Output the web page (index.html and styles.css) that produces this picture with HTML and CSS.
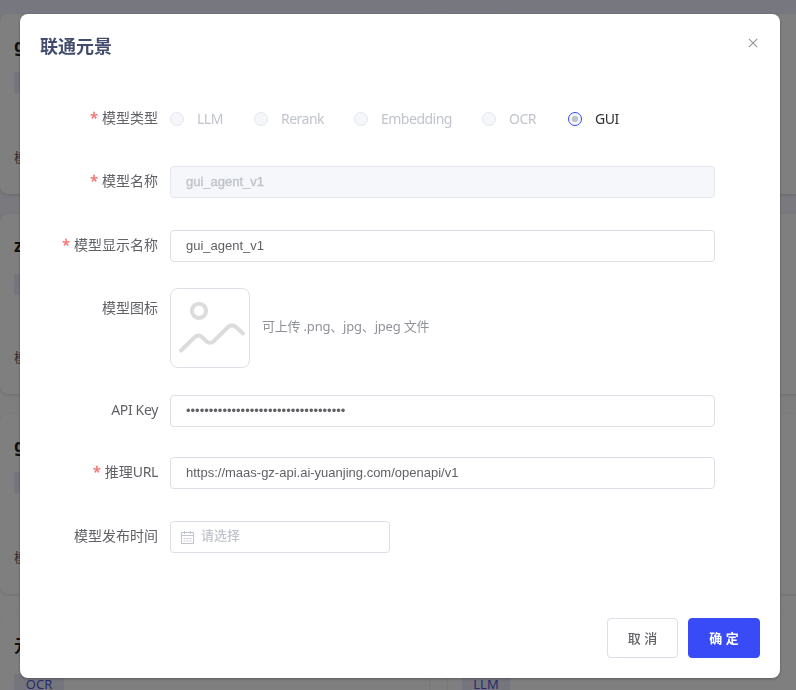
FILE: index.html
```html
<!DOCTYPE html>
<html lang="zh-CN">
<head>
<meta charset="utf-8">
<title>联通元景</title>
<link rel="stylesheet" href="styles.css">
</head>
<body>
<main class="page">
  <article class="card"><h3>gui_agent_v1</h3><span class="tag">GUI</span><p>模型</p></article>
  <article class="card"></article>
  <article class="card"><h3>zh_model</h3><span class="tag low">LLM</span><p>模型</p></article>
  <article class="card"></article>
  <article class="card"><h3>gui_agent</h3><span class="tag">GUI</span><p>模型</p></article>
  <article class="card"></article>
  <article class="card"><h3>元景</h3><span class="tag low">OCR</span></article>
  <article class="card"><h3>元景</h3><span class="tag low">LLM</span></article>
</main>
<div class="mask"></div>
<section class="dialog">
  <header class="head">
    <h2>联通元景</h2>
    <svg class="close" viewBox="0 0 10 10"><path d="M.8.8 9.2 9.2M9.2.8.8 9.2"/></svg>
  </header>
  <form class="form">
    <div class="row types">
      <label class="name req">模型类型</label>
      <div class="radios">
        <span class="radio"><i></i>LLM</span>
        <span class="radio"><i></i>Rerank</span>
        <span class="radio"><i></i>Embedding</span>
        <span class="radio"><i></i>OCR</span>
        <span class="radio on"><i></i>GUI</span>
      </div>
    </div>
    <div class="row model"><label class="name req">模型名称</label><div class="input disabled">gui_agent_v1</div></div>
    <div class="row display"><label class="name req">模型显示名称</label><div class="input">gui_agent_v1</div></div>
    <div class="row upload">
      <label class="name">模型图标</label>
      <div class="picture">
        <svg viewBox="0 0 78 78"><circle cx="28" cy="21.8" r="7.1"/><path d="M10 61.500 22.500 49.300Q27 44.500 31.500 48.500L35 52Q39 55.500 43 52L56 39Q61 34 65.500 38.500L72 44.500"/></svg>
      </div>
      <span class="hint">可上传 .png、jpg、jpeg 文件</span>
    </div>
    <div class="row key"><label class="name latin">API Key</label><div class="input">•••••••••••••••••••••••••••••••••••</div></div>
    <div class="row url"><label class="name req">推理<span class="latin">URL</span></label><div class="input">https://maas-gz-api.ai-yuanjing.com/openapi/v1</div></div>
    <div class="row date">
      <label class="name">模型发布时间</label>
      <div class="input picker">
        <svg viewBox="0 0 13 13"><path d="M.5 1.500h12v11H.5zM.5 4.500h12M3.500 0v3M9.500 0v3M2.500 7.500h2M5.500 7.500h2M8.500 7.500h2M2.500 10h2M5.500 10h2M8.500 10h2"/></svg>
        <span>请选择</span>
      </div>
    </div>
  </form>
  <footer class="foot">
    <button class="btn">取 消</button>
    <button class="btn primary">确 定</button>
  </footer>
</section>
</body>
</html>
```
FILE: styles.css
```css
* { box-sizing: border-box; }
body {
  margin: 0;
  height: 690px;
  overflow: hidden;
  font-family: "Noto Sans", "Noto Sans CJK SC", sans-serif;
  font-size: 13px;
  color: #606266;
}
.page {
  display: grid;
  grid-template-columns: 429px 429px;
  grid-auto-rows: 180px;
  gap: 20px 19px;
  height: 690px;
  padding-top: 14px;
  overflow: hidden;
  background: linear-gradient(#eff0fe 0, #f2f2fc 210px, #fdfdfe 420px, #fff 620px);
}
.card {
  padding: 19px 14px;
  border-radius: 8px;
  background: #fff;
  box-shadow: 0 1px 3px rgba(0, 0, 0, .14);
}
.card h3 { margin: 0; height: 39px; line-height: 26px; font-size: 17px; color: #222; }
.tag {
  display: block;
  width: 50px;
  height: 21px;
  line-height: 21px;
  text-align: center;
  background: #ebebfc;
  color: #5058d8;
}
.card:nth-child(8) .tag { width: 48px; }
.tag.low { margin-top: 2px; margin-bottom: -2px; }
.card p { margin: 54px 0 0; line-height: 20px; }
.mask { position: fixed; inset: 0; background: rgba(0, 0, 0, .5); }
.dialog {
  position: fixed;
  top: 14px;
  left: 20px;
  display: flex;
  flex-direction: column;
  width: 760px;
  height: 664px;
  border-radius: 8px;
  background: #fff;
  box-shadow: 0 1px 3px rgba(0, 0, 0, .3);
}
.head { display: flex; justify-content: space-between; padding: 20px 22px 0 20px; height: 92px; }
.head h2 { margin: 0; font-size: 18px; line-height: 25px; font-weight: 700; color: #434c6c; }
.close { width: 10px; height: 10px; margin-top: 4px; stroke: #909399; stroke-width: 1.1; fill: none; }
.form { display: flex; flex-direction: column; padding-right: 65px; }
.row { display: flex; align-items: flex-start; }
.name { width: 138px; margin-right: 12px; text-align: right; font-size: 14px; line-height: 30px; flex: none; white-space: nowrap; }
.latin { letter-spacing: -.35px; }
.req::before { content: "*"; margin-right: 4px; color: #f56c6c; -webkit-text-stroke: .3px #f56c6c; }
.types { height: 60px; margin-top: -3px; }
.radios { display: grid; grid-template-columns: 84px 100px 128px 86px auto; padding-top: 1px; line-height: 29px; }
.radio { display: flex; align-items: center; height: 29px; color: #c0c4cc; font-size: 14px; letter-spacing: -.5px; }
.radio i { width: 14px; height: 14px; margin-right: 13px; border: 1px solid #e4e7ed; border-radius: 50%; background: #f5f7fa; }
.radio.on { color: #303133; }
.radio.on i { border-color: #384bf7; background: radial-gradient(circle, #c0c4cc 0 3px, #f5f7fa 3.6px); }
.input {
  flex: 1;
  height: 32px;
  padding: 0 15px;
  border: 1px solid #dcdfe6;
  border-radius: 4px;
  font-family: "Liberation Sans", "Noto Sans CJK SC", sans-serif;
  line-height: 30px;
}
.disabled { background: #f5f7fa; border-color: #e4e7ed; color: #c0c4cc; -webkit-text-stroke: .4px #c0c4cc; }
.model { margin-top: 3px; height: 64px; }
.display { height: 58px; }
.upload { height: 107px; }
.upload .name { line-height: 40px; }
.picture { width: 80px; height: 80px; border: 1px solid #dcdfe6; border-radius: 8px; }
.picture svg { display: block; width: 78px; height: 78px; fill: none; stroke: #dcdcdc; stroke-width: 4; stroke-linecap: round; }
.hint { margin-left: 12px; line-height: 76px; color: #909399; letter-spacing: -.2px; }
.key { height: 62px; }
.url { height: 64px; }
.picker { display: flex; align-items: center; flex: none; width: 220px; padding: 0 10px; color: #c0c4cc; font-weight: 500; }
.picker span { line-height: 28px; padding-bottom: 2px; }
.picker svg { width: 13px; height: 13px; margin-right: 7px; fill: none; stroke: #c0c4cc; stroke-width: 1; }
.foot { display: flex; justify-content: flex-end; gap: 10px; margin-top: auto; padding: 0 20px 20px; }
.btn {
  width: 71px;
  height: 40px;
  padding: 0 0 2px;
  border: 1px solid #dcdfe6;
  border-radius: 4px;
  background: #fff;
  color: #606266;
  font: 500 13px "Noto Sans", "Noto Sans CJK SC", sans-serif;
}
.primary { width: 72px; border-color: #384bf7; background: #384bf7; color: #fff; font-weight: 700; }
```
